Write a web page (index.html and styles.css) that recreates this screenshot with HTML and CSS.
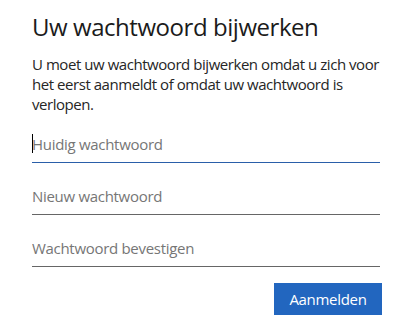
FILE: index.html
```html
<!DOCTYPE html>
<html lang="nl">
  <head>
    <meta charset="UTF-8" />
    <title>Uw wachtwoord bijwerken</title>
    <link rel="stylesheet" href="styles.css">
  </head>
  <body>
    <div class="container-wachtwoord">
      <h1>Uw wachtwoord bijwerken</h1>
      <p class="uitleg">
        U moet uw wachtwoord bijwerken omdat u zich voor het eerst aanmeldt of
        omdat uw wachtwoord is verlopen.
      </p>

      <form id="formulierWachtwoord">
        <div class="veld actief">
          <span class="cursor"></span>
          <input type="password" placeholder="Huidig wachtwoord" />
        </div>
        <div class="veld">
          <input type="password" placeholder="Nieuw wachtwoord" />
        </div>
        <div class="veld">
          <input type="password" placeholder="Wachtwoord bevestigen" />
        </div>

        <div class="knoppen">
          <button type="submit">Aanmelden</button>
        </div>
      </form>
    </div>
  </body>
</html>
```

FILE: styles.css
```css
body {
  margin: 0;
  background-color: #fff;
  color: #1b1b1b;
  font-family: "Open Sans", "Noto Sans", Arial, sans-serif;
}
.container-wachtwoord {
  width: 350px;
  padding: 11px 0 0 32px;
}
h1 {
  margin: 0;
  font-size: 24px;
  font-weight: 400;
  letter-spacing: -0.45px;
  line-height: 32px;
  color: #1b1b1b;
}
.uitleg {
  margin: 11px 0 0;
  font-size: 15px;
  letter-spacing: -0.45px;
  line-height: 20px;
  color: #262626;
}
form {
  display: flex;
  flex-direction: column;
  margin-top: 12px;
  width: 348px;
}
.veld {
  position: relative;
  height: 36px;
  margin-bottom: 15px;
  border-bottom: 1px solid #666;
}
.veld.actief {
  border-bottom-color: #2a5fa9;
}
.cursor {
  position: absolute;
  left: 0;
  top: 8px;
  width: 1px;
  height: 19px;
  background: #000;
}
input {
  width: 100%;
  height: 36px;
  padding: 0;
  border: none;
  outline: none;
  font-family: inherit;
  font-size: 15px;
  letter-spacing: -0.3px;
  color: #1b1b1b;
  background: transparent;
}
input::placeholder {
  color: #767676;
}
.knoppen {
  display: flex;
  justify-content: flex-end;
  margin-top: 1px;
}
button {
  width: 108px;
  height: 32px;
  margin-right: -2px;
  border: none;
  background-color: #2266bf;
  color: #fff;
  font-family: inherit;
  font-size: 15px;
  letter-spacing: -0.3px;
  cursor: pointer;
}
```
